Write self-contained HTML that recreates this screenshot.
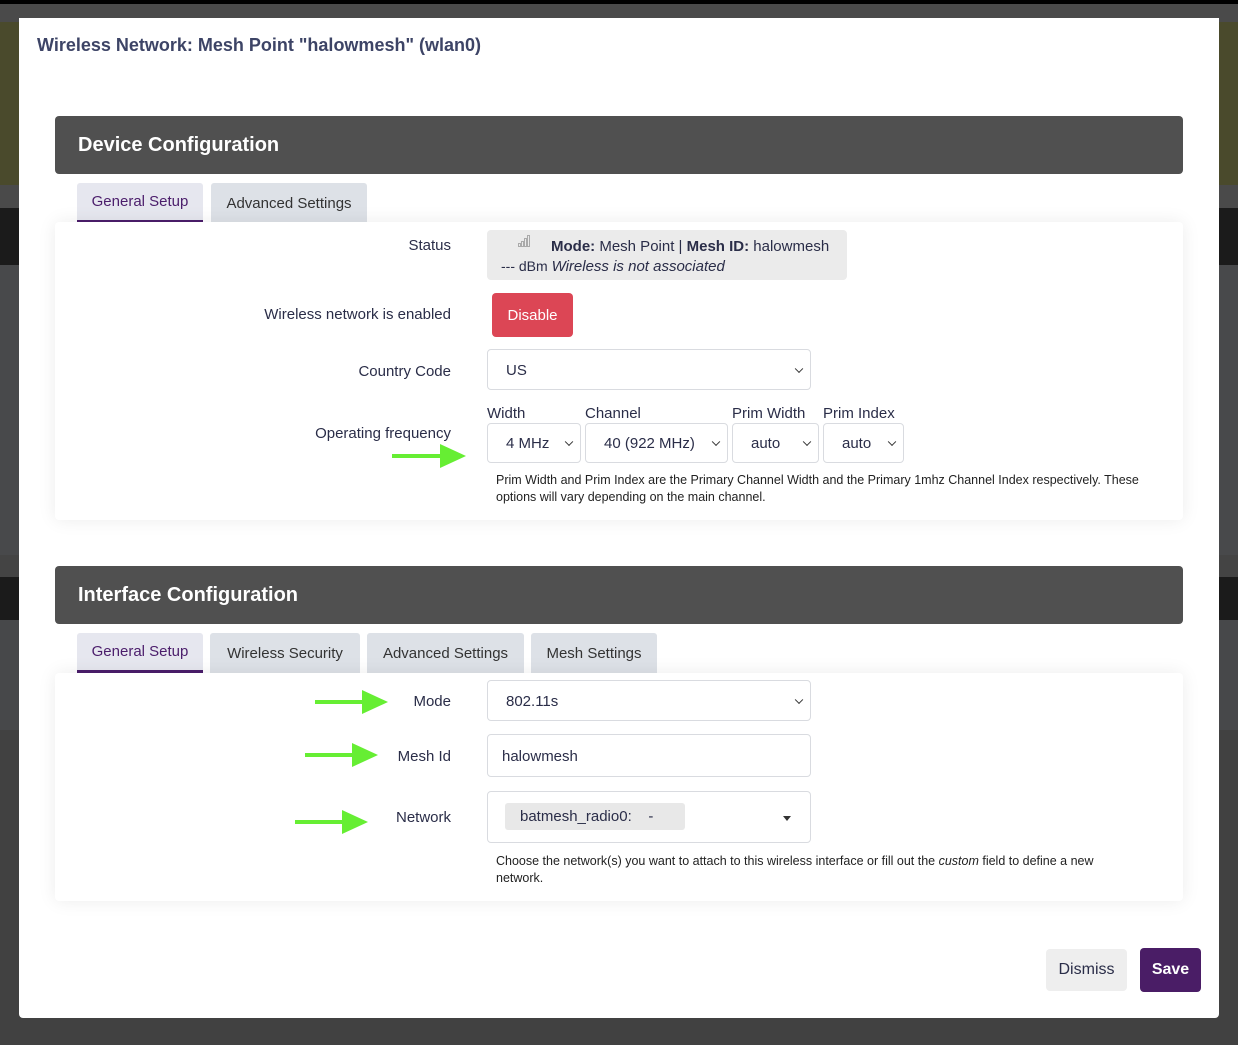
<!DOCTYPE html>
<html><head><meta charset="utf-8"><style>
*{box-sizing:border-box;margin:0;padding:0}
body{width:1238px;height:1045px;overflow:hidden;background:#414141;font-family:"Liberation Sans",sans-serif;color:#2a2d48;position:relative}
.a{position:absolute}
.lbl{position:absolute;right:787px;font-size:15px;text-align:right;white-space:nowrap}
.sel{position:absolute;border:1px solid #d9dbe0;border-radius:4px;background:#fff;font-size:15px;padding-left:18px;display:flex;align-items:center;padding-top:1px}
.sel::after{content:"";position:absolute;right:8px;top:50%;width:5px;height:5px;border-right:1.6px solid #333;border-bottom:1.6px solid #333;transform:translateY(-70%) rotate(45deg)}
.sel.noarr::after{display:none}
.tab{position:absolute;height:40px;background:#dde1e7;border-radius:3px 3px 0 0;font-size:15px;display:flex;align-items:center;justify-content:center;color:#333}
.tab.on{background:#e6e7ef;color:#4b1d6b;border-bottom:3px solid #4b1d6b}
.hdr{position:absolute;left:55px;width:1128px;height:58px;background:#505050;border-radius:4px;color:#fff;font-weight:bold;font-size:20px;padding-left:23px;display:flex;align-items:center}
.panel{position:absolute;left:55px;width:1128px;background:#fff;border-radius:4px;box-shadow:0 0 18px rgba(0,0,0,.08)}
.help{position:absolute;left:496px;font-size:12.5px;line-height:17px;color:#222}
</style></head><body>
<div class="a" style="left:0;top:0;width:1238px;height:4px;background:#000"></div>
<div class="a" style="left:0;top:4px;width:1238px;height:18px;background:#4a4a4a"></div>
<div class="a" style="left:0;top:22px;width:1238px;height:163px;background:#4a4a2c"></div>
<div class="a" style="left:0;top:185px;width:1238px;height:23px;background:#4a4a4a"></div>
<div class="a" style="left:0;top:208px;width:1238px;height:57px;background:#1b1b1b"></div>
<div class="a" style="left:0;top:265px;width:1238px;height:290px;background:#48494b"></div>
<div class="a" style="left:0;top:555px;width:1238px;height:22px;background:#444"></div>
<div class="a" style="left:0;top:577px;width:1238px;height:43px;background:#1b1b1b"></div>
<div class="a" style="left:0;top:620px;width:1238px;height:110px;background:#47484a"></div>

<div class="a" style="left:19px;top:18px;width:1200px;height:1000px;background:#fff;border-radius:0 0 4px 4px"></div>
<div class="a" style="left:37px;top:35px;font-size:18px;color:#3d4466;font-weight:600">Wireless Network: Mesh Point "halowmesh" (wlan0)</div>

<div class="hdr" style="top:116px">Device Configuration</div>
<div class="tab on" style="left:77px;top:183px;width:126px">General Setup</div>
<div class="tab" style="left:211px;top:183px;width:156px">Advanced Settings</div>
<div class="panel" style="top:222px;height:298px"></div>

<div class="lbl" style="top:237px">Status</div>
<div class="a" style="left:487px;top:230px;width:360px;height:50px;background:#ebebeb;border-radius:4px"></div>
<svg class="a" style="left:517px;top:234px" width="16" height="14"><g fill="none" stroke="#aaa"><rect x="1.5" y="9.5" width="2" height="3"/><rect x="4.5" y="7.5" width="2" height="5"/><rect x="7.5" y="4.5" width="2" height="8"/><rect x="10.5" y="1.5" width="2" height="11"/></g></svg>
<div class="a" style="left:551px;top:238px;font-size:15px"><b>Mode:</b> Mesh Point | <b>Mesh ID:</b> halowmesh</div>
<div class="a" style="left:501px;top:258px;font-size:14px">--- dBm <i style="font-size:15px">Wireless is not associated</i></div>

<div class="lbl" style="top:306px">Wireless network is enabled</div>
<div class="a" style="left:492px;top:293px;width:81px;height:44px;background:#dc4655;border-radius:4px;color:#fff;font-size:15px;display:flex;align-items:center;justify-content:center">Disable</div>

<div class="lbl" style="top:363px">Country Code</div>
<div class="sel" style="left:487px;top:349px;width:324px;height:41px">US</div>

<div class="lbl" style="top:425px">Operating frequency</div>
<div class="a" style="left:487px;top:405px;font-size:15px">Width</div>
<div class="a" style="left:585px;top:405px;font-size:15px">Channel</div>
<div class="a" style="left:732px;top:405px;font-size:15px">Prim Width</div>
<div class="a" style="left:823px;top:405px;font-size:15px">Prim Index</div>
<div class="sel" style="left:487px;top:423px;width:94px;height:40px">4 MHz</div>
<div class="sel" style="left:585px;top:423px;width:143px;height:40px">40 (922 MHz)</div>
<div class="sel" style="left:732px;top:423px;width:87px;height:40px">auto</div>
<div class="sel" style="left:823px;top:423px;width:81px;height:40px">auto</div>
<div class="help" style="top:472px">Prim Width and Prim Index are the Primary Channel Width and the Primary 1mhz Channel Index respectively. These<br>options will vary depending on the main channel.</div>

<div class="hdr" style="top:566px">Interface Configuration</div>
<div class="tab on" style="left:77px;top:633px;width:126px">General Setup</div>
<div class="tab" style="left:210px;top:633px;width:150px">Wireless Security</div>
<div class="tab" style="left:367px;top:633px;width:157px">Advanced Settings</div>
<div class="tab" style="left:531px;top:633px;width:126px">Mesh Settings</div>
<div class="panel" style="top:673px;height:228px"></div>

<div class="lbl" style="top:693px">Mode</div>
<div class="sel" style="left:487px;top:680px;width:324px;height:41px">802.11s</div>
<div class="lbl" style="top:748px">Mesh Id</div>
<div class="sel noarr" style="left:487px;top:734px;width:324px;height:43px;padding-left:14px">halowmesh</div>
<div class="lbl" style="top:809px">Network</div>
<div class="a" style="left:487px;top:791px;width:324px;height:52px;border:1px solid #d9dbe0;border-radius:4px;background:#fff"></div>
<div class="a" style="left:505px;top:803px;width:180px;height:27px;background:#e8e8e8;border-radius:3px;font-size:15px;padding-left:15px;line-height:28px">batmesh_radio0:&nbsp;&nbsp;&nbsp;&nbsp;-</div>
<div class="a" style="left:783px;top:816px;width:0;height:0;border-left:4.5px solid transparent;border-right:4.5px solid transparent;border-top:5px solid #333"></div>
<div class="help" style="top:853px">Choose the network(s) you want to attach to this wireless interface or fill out the <i>custom</i> field to define a new<br>network.</div>

<div class="a" style="left:1046px;top:949px;width:81px;height:42px;background:#eee;border-radius:4px;font-size:16px;display:flex;align-items:center;justify-content:center;color:#2a2d48">Dismiss</div>
<div class="a" style="left:1140px;top:948px;width:61px;height:44px;background:#4a1d66;border-radius:4px;font-size:16px;font-weight:bold;display:flex;align-items:center;justify-content:center;color:#fff">Save</div>

<svg class="a" style="left:0;top:0" width="1238" height="1045">
<g fill="#66ee33" stroke="#66ee33">
<line x1="392" y1="456" x2="442" y2="456" stroke-width="4"/><polygon points="440,444 466,456 440,468" stroke="none"/>
<line x1="315" y1="702" x2="364" y2="702" stroke-width="4"/><polygon points="362,690 388,702 362,714" stroke="none"/>
<line x1="305" y1="755" x2="354" y2="755" stroke-width="4"/><polygon points="352,743 378,755 352,767" stroke="none"/>
<line x1="295" y1="822" x2="344" y2="822" stroke-width="4"/><polygon points="342,810 368,822 342,834" stroke="none"/>
</g></svg>
</body></html>
